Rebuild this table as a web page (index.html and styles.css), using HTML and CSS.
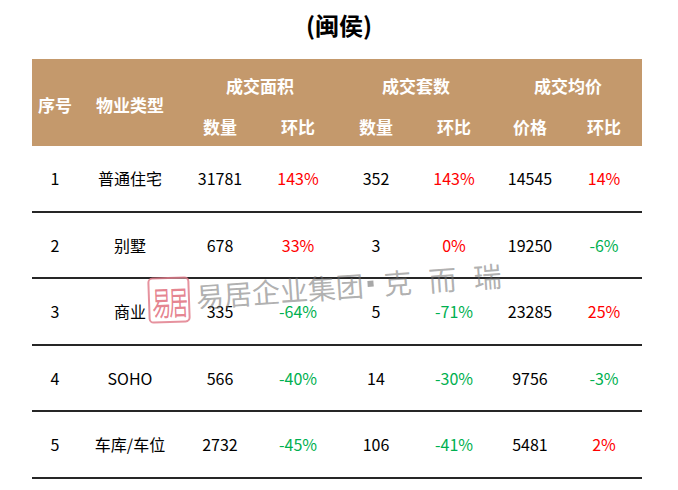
FILE: index.html
```html
<!DOCTYPE html>
<html lang="zh-CN">
<head>
<meta charset="utf-8">
<title>闽侯</title>
<link rel="stylesheet" href="styles.css">
</head>
<body>
<div class="page">
  <h1 class="title">(闽侯)</h1>
  <div class="table">
    <div class="head">
      <div class="hc tall">序号</div>
      <div class="hc tall">物业类型</div>
      <div class="hc group">成交面积</div>
      <div class="hc group">成交套数</div>
      <div class="hc group">成交均价</div>
      <div class="hc sub">数量</div>
      <div class="hc sub">环比</div>
      <div class="hc sub">数量</div>
      <div class="hc sub">环比</div>
      <div class="hc sub">价格</div>
      <div class="hc sub">环比</div>
    </div>
    <div class="row">
      <div>1</div><div>普通住宅</div><div>31781</div><div class="up">143%</div><div>352</div><div class="up">143%</div><div>14545</div><div class="up">14%</div>
    </div>
    <div class="row">
      <div>2</div><div>别墅</div><div>678</div><div class="up">33%</div><div>3</div><div class="up">0%</div><div>19250</div><div class="down">-6%</div>
    </div>
    <div class="row">
      <div>3</div><div>商业</div><div>335</div><div class="down">-64%</div><div>5</div><div class="down">-71%</div><div>23285</div><div class="up">25%</div>
    </div>
    <div class="row">
      <div>4</div><div>SOHO</div><div>566</div><div class="down">-40%</div><div>14</div><div class="down">-30%</div><div>9756</div><div class="down">-3%</div>
    </div>
    <div class="row">
      <div>5</div><div>车库/车位</div><div>2732</div><div class="down">-45%</div><div>106</div><div class="down">-41%</div><div>5481</div><div class="up">2%</div>
    </div>
    <div class="watermark">
      <div class="stamp"><span class="stamp-glyphs">易居</span></div>
      <div class="wm-text">易居企业集团<span class="dot"></span><span class="brand">克而瑞</span></div>
    </div>
  </div>
</div>
</body>
</html>
```
FILE: styles.css
```css
* { box-sizing: border-box; }
html, body {
  margin: 0;
  padding: 0;
  background: #ffffff;
}
body {
  width: 678px;
  height: 490px;
  overflow: hidden;
  font-family: "Noto Sans CJK SC", "Noto Sans", sans-serif;
  color: #000;
}
.title {
  margin: 0;
  height: 59px;
  line-height: 50px;
  font-size: 24px;
  font-weight: 700;
  text-align: center;
  color: #000;
}
.table {
  position: relative;
  margin-left: 32px;
  width: 610px;
}
.head, .row {
  display: grid;
  grid-template-columns: 46px 104px 76px 80px 76px 80px 72px 76px;
}
.head {
  background: #c4996c;
  grid-template-rows: 49px 38px;
  color: #fff;
  font-weight: 700;
  font-size: 17px;
}
.hc {
  display: flex;
  align-items: center;
  justify-content: center;
  line-height: 1;
}
.tall { grid-row: 1 / 3; padding-top: 3px; }
.group { grid-column: span 2; padding-top: 4px; }
.sub { padding-bottom: 2px; }
.row {
  height: 66.5px;
  border-bottom: 2px solid #262626;
  font-size: 16px;
}
.row > div {
  display: flex;
  align-items: center;
  justify-content: center;
  line-height: 1;
}
.up { color: #ff0000; }
.down { color: #00b050; }
.watermark {
  position: absolute;
  left: 116px;
  top: 218px;
  display: flex;
  align-items: center;
  gap: 6px;
  pointer-events: none;
}
.stamp {
  width: 42px;
  height: 46px;
  border: 2px solid rgba(222, 110, 125, 0.75);
  border-radius: 5px;
  display: flex;
  align-items: center;
  justify-content: center;
  transform: rotate(-2deg);
  background: rgba(255, 255, 255, 0.4);
  overflow: hidden;
}
.stamp-glyphs {
  display: inline-block;
  color: rgba(222, 100, 115, 0.8);
  font-size: 19px;
  line-height: 1;
  letter-spacing: -2px;
  transform: scale(1, 1.75);
}
.wm-text {
  font-size: 28px;
  line-height: 1;
  color: rgba(110, 110, 110, 0.55);
  transform: rotate(-4deg);
  transform-origin: left center;
  white-space: nowrap;
  display: flex;
  align-items: center;
  margin-top: -8px;
}
.dot {
  display: inline-block;
  width: 6px;
  height: 6px;
  background: rgba(110, 110, 110, 0.6);
  margin: 0 10px 0 4px;
}
.brand {
  letter-spacing: 17px;
}
```
